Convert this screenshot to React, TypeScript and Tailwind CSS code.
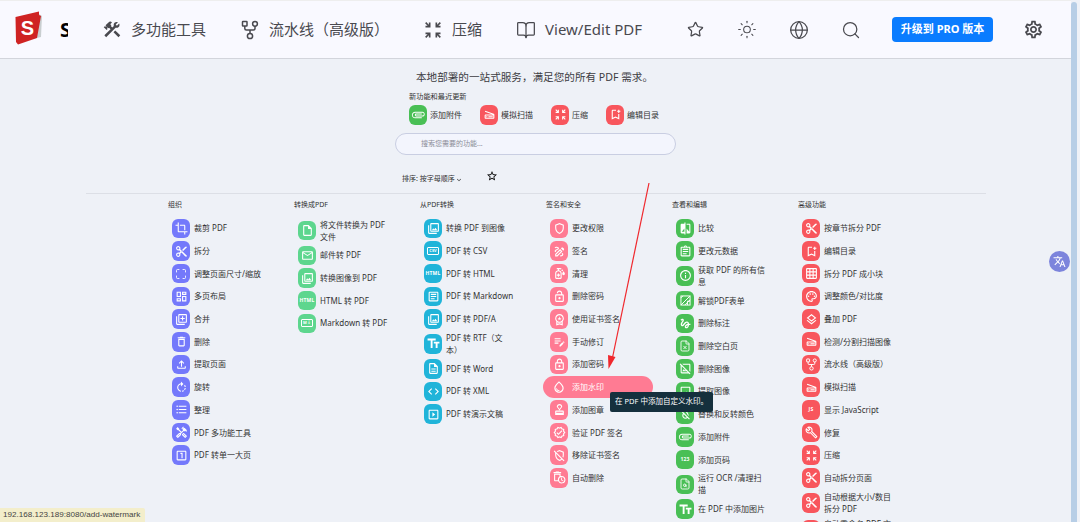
import React from 'react';
import { BookOpen, FileSearch, FileX, Globe, Maximize, Search, Star, Sun } from 'lucide-react';
import {
  MdContentCut, MdCrop, MdOutlineApproval, MdOutlineArticle, MdOutlineAssignment,
  MdOutlineAttachment, MdOutlineAutoDelete, MdOutlineBookmarkAdd, MdOutlineBuild, MdOutlineCode,
  MdOutlineCompare, MdOutlineConstruction, MdOutlineDashboard, MdOutlineDelete, MdOutlineDescription,
  MdOutlineDraw, MdOutlineEditNote, MdOutlineEmail, MdOutlineFileUpload,
  MdOutlineFormatColorReset, MdOutlineFormatListBulleted, MdOutlineGesture,
  MdOutlineGridOn, MdOutlineHandyman, MdOutlineHideImage, MdOutlineImage, MdOutlineInfo,
  MdOutlineInsertDriveFile, MdOutlineLayers, MdOutlineLibraryAdd,
  MdOutlineLock, MdOutlineLockOpen, MdOutlineLooksOne, MdOutlinePalette,
  MdOutlinePhotoLibrary, MdOutlineRemoveModerator, MdOutlineRotateRight, MdOutlineSanitizer,
  MdOutlineScanner, MdOutlineSettings, MdOutlineShield, MdOutlineSlideshow,
  MdOutlineStarBorder, MdOutlineTextFields, MdOutlineTranslate, MdOutlineVerified, MdOutlineWaterDrop,
  MdOutlineWorkspacePremium, MdOutlineZoomInMap, MdExpandMore,
} from 'react-icons/md';

type Tool = { label: string; icon: React.ReactNode; active?: boolean };
type Group = { title: string; color: string; tools: Tool[] };

const ic = (I: React.ComponentType<{ size?: number }>, size = 13) => <I size={size} />;
const tag = (s: string) => <span className="text-[5px] font-bold leading-none tracking-[0.2px]">{s}</span>;
const framed = (s: string) => (
  <span className="rounded-[1px] border border-white px-[1px] text-[4px] font-bold leading-[6px]">{s}</span>
);

function PipelineIcon({ size = 13 }: { size?: number }) {
  return (
    <svg width={size} height={size} viewBox="0 0 20 20" fill="none" stroke="currentColor" strokeWidth="1.5">
      <rect x="2.5" y="1.5" width="4.5" height="4.5" rx="0.5" />
      <circle cx="15" cy="3.8" r="2.4" />
      <circle cx="10" cy="16" r="2.6" />
      <path d="M4.8 6 V8.5 Q4.8 10 6.3 10 H13.5 Q15 10 15 8.5 V6.2 M10 10 V13.4" />
    </svg>
  );
}

function UnlockFormIcon() {
  return (
    <svg width="13" height="13" viewBox="0 0 20 20" fill="none" stroke="currentColor" strokeWidth="1.5">
      <rect x="3" y="3" width="14" height="14" />
      <path d="M3 17 L17 3 M9 17 L17 9 M6 3 L3 6 M13 17 V11 H17" />
    </svg>
  );
}

const groups: Group[] = [
  {
    title: '组织',
    color: 'bg-[#7479fb]',
    tools: [
      { label: '裁剪 PDF', icon: ic(MdCrop) },
      { label: '拆分', icon: ic(MdContentCut) },
      { label: '调整页面尺寸/缩放', icon: <Maximize size={12} strokeWidth={1.75} /> },
      { label: '多页布局', icon: ic(MdOutlineDashboard) },
      { label: '合并', icon: ic(MdOutlineLibraryAdd) },
      { label: '删除', icon: ic(MdOutlineDelete) },
      { label: '提取页面', icon: ic(MdOutlineFileUpload) },
      { label: '旋转', icon: ic(MdOutlineRotateRight) },
      { label: '整理', icon: ic(MdOutlineFormatListBulleted) },
      { label: 'PDF 多功能工具', icon: ic(MdOutlineHandyman) },
      { label: 'PDF 转单一大页', icon: ic(MdOutlineLooksOne) },
    ],
  },
  {
    title: '转换成PDF',
    color: 'bg-[#5dd68e]',
    tools: [
      { label: '将文件转换为 PDF 文件', icon: ic(MdOutlineInsertDriveFile) },
      { label: '邮件转 PDF', icon: ic(MdOutlineEmail) },
      { label: '转换图像到 PDF', icon: ic(MdOutlinePhotoLibrary) },
      { label: 'HTML 转 PDF', icon: tag('HTML') },
      { label: 'Markdown 转 PDF', icon: framed('M↓') },
    ],
  },
  {
    title: '从PDF转换',
    color: 'bg-[#20b4d9]',
    tools: [
      { label: '转换 PDF 到图像', icon: ic(MdOutlinePhotoLibrary) },
      { label: 'PDF 转 CSV', icon: framed('CSV') },
      { label: 'PDF 转 HTML', icon: tag('HTML') },
      { label: 'PDF 转 Markdown', icon: ic(MdOutlineArticle) },
      { label: 'PDF 转 PDF/A', icon: ic(MdOutlinePhotoLibrary) },
      { label: 'PDF 转 RTF（文\n本）', icon: ic(MdOutlineTextFields, 15) },
      { label: 'PDF 转 Word', icon: ic(MdOutlineDescription) },
      { label: 'PDF 转 XML', icon: ic(MdOutlineCode) },
      { label: 'PDF 转演示文稿', icon: ic(MdOutlineSlideshow) },
    ],
  },
  {
    title: '签名和安全',
    color: 'bg-[#ff7b93]',
    tools: [
      { label: '更改权限', icon: ic(MdOutlineShield) },
      { label: '签名', icon: ic(MdOutlineDraw) },
      { label: '清理', icon: ic(MdOutlineSanitizer) },
      { label: '删除密码', icon: ic(MdOutlineLockOpen) },
      { label: '使用证书签名', icon: ic(MdOutlineWorkspacePremium) },
      { label: '手动修订', icon: ic(MdOutlineEditNote) },
      { label: '添加密码', icon: ic(MdOutlineLock) },
      { label: '添加水印', icon: ic(MdOutlineWaterDrop, 14), active: true },
      { label: '添加图章', icon: ic(MdOutlineApproval) },
      { label: '验证 PDF 签名', icon: ic(MdOutlineVerified) },
      { label: '移除证书签名', icon: ic(MdOutlineRemoveModerator) },
      { label: '自动删除', icon: ic(MdOutlineAutoDelete) },
    ],
  },
  {
    title: '查看和编辑',
    color: 'bg-[#49bf55]',
    tools: [
      { label: '比较', icon: ic(MdOutlineCompare) },
      { label: '更改元数据', icon: ic(MdOutlineAssignment) },
      { label: '获取 PDF 的所有信息', icon: ic(MdOutlineInfo) },
      { label: '解锁PDF表单', icon: <UnlockFormIcon /> },
      { label: '删除标注', icon: ic(MdOutlineGesture) },
      { label: '删除空白页', icon: <FileX size={12} strokeWidth={1.75} /> },
      { label: '删除图像', icon: ic(MdOutlineHideImage) },
      { label: '提取图像', icon: ic(MdOutlineImage) },
      { label: '替换和反转颜色', icon: ic(MdOutlineFormatColorReset) },
      { label: '添加附件', icon: ic(MdOutlineAttachment, 14) },
      { label: '添加页码', icon: tag('123') },
      { label: '运行 OCR /清理扫描', icon: <FileSearch size={12} strokeWidth={1.75} /> },
      { label: '在 PDF 中添加图片', icon: ic(MdOutlineTextFields, 15) },
    ],
  },
  {
    title: '高级功能',
    color: 'bg-[#f8565d]',
    tools: [
      { label: '按章节拆分 PDF', icon: ic(MdContentCut) },
      { label: '编辑目录', icon: ic(MdOutlineBookmarkAdd) },
      { label: '拆分 PDF 成小块', icon: ic(MdOutlineGridOn) },
      { label: '调整颜色/对比度', icon: ic(MdOutlinePalette) },
      { label: '叠加 PDF', icon: ic(MdOutlineLayers) },
      { label: '检测/分割扫描图像', icon: ic(MdOutlineScanner) },
      { label: '流水线（高级版）', icon: <PipelineIcon /> },
      { label: '模拟扫描', icon: ic(MdOutlineScanner) },
      { label: '显示 JavaScript', icon: tag('JS') },
      { label: '修复', icon: ic(MdOutlineBuild) },
      { label: '压缩', icon: ic(MdOutlineZoomInMap) },
      { label: '自动拆分页面', icon: ic(MdContentCut) },
      { label: '自动根据大小/数目拆分 PDF', icon: ic(MdContentCut) },
      { label: '自动重命名 PDF 文件', icon: ic(MdOutlineInsertDriveFile) },
    ],
  },
];

const fresh = [
  { label: '添加附件', color: 'bg-[#49bf55]', icon: ic(MdOutlineAttachment, 14) },
  { label: '模拟扫描', color: 'bg-[#f8565d]', icon: ic(MdOutlineScanner) },
  { label: '压缩', color: 'bg-[#f8565d]', icon: ic(MdOutlineZoomInMap) },
  { label: '编辑目录', color: 'bg-[#f8565d]', icon: ic(MdOutlineBookmarkAdd) },
];

function IconBox({ color, children }: { color: string; children: React.ReactNode }) {
  return (
    <span className={`flex h-[19.5px] w-[18px] shrink-0 items-center justify-center rounded-[6px] text-white ${color}`}>
      {children}
    </span>
  );
}

function NavItem({ icon, label }: { icon: React.ReactNode; label: string }) {
  return (
    <div className="flex items-center gap-[9px] text-[15px] text-[#49494f]">
      <span className="flex w-[20px] justify-center">{icon}</span>
      <span className="whitespace-nowrap">{label}</span>
    </div>
  );
}

function Logo() {
  return (
    <svg width="28" height="34" viewBox="0 0 28 34" className="-mt-[4px] shrink-0">
      <path d="M8 30 L26 26 L27 5 L24 3 L22 24 Z" fill="#c9ced0" />
      <path d="M0.5 6 L24 0.5 L24 4 L26 5 L22 27 L3 33.5 L1 31 Z" fill="#cf2323" />
      <text x="12.5" y="24" textAnchor="middle" fontSize="20" fontWeight="700" fill="#fff" fontFamily="Liberation Sans">S</text>
    </svg>
  );
}

function Navbar() {
  return (
    <nav className="flex h-[59px] shrink-0 items-center border-t border-b border-t-[#eeeeee] border-b-[#d3d5dc] bg-[#f9f9ff] pl-[15px]">
      <Logo />
      <div className="ml-[17px] mr-[34px] h-[20px] w-[8px] overflow-hidden text-[20px] font-bold leading-[20px] text-black">S</div>
      <div className="flex items-center gap-[34px]">
        <NavItem icon={<MdOutlineConstruction size={21} />} label="多功能工具" />
        <NavItem icon={<PipelineIcon size={20} />} label="流水线（高级版）" />
        <NavItem icon={<MdOutlineZoomInMap size={20} />} label="压缩" />
        <NavItem icon={<BookOpen size={20} strokeWidth={1.5} />} label="View/Edit PDF" />
      </div>
      <div className="ml-[43px] flex items-center gap-[32px] text-[#49494f]">
        <span className="flex w-[20px] justify-center">
          <Star size={17} strokeWidth={1.75} />
        </span>
        <span className="flex w-[20px] justify-center">
          <Sun size={23} strokeWidth={1.25} />
        </span>
        <Globe size={20} strokeWidth={1.5} />
        <Search size={20} strokeWidth={1.5} />
      </div>
      <button className="ml-[31px] h-[25px] w-[101px] whitespace-nowrap rounded-[4px] bg-[#0a7cff] text-[11px] font-bold text-white">
        升级到 PRO 版本
      </button>
      <span className="ml-[30px] text-[#49494f]">
        <MdOutlineSettings size={21} />
      </span>
    </nav>
  );
}

function ToolRow({ tool, color }: { tool: Tool; color: string }) {
  if (tool.active) {
    return (
      <div className="relative z-10 my-[0.35px] -ml-[3px] flex h-[22px] w-[110px] items-center gap-[4px] rounded-full bg-[#ff7b93] pl-[7px] text-white">
        <span className="flex h-[19.5px] w-[18px] shrink-0 items-center justify-center">{tool.icon}</span>
        <span className="text-[8px] leading-[12px]">{tool.label}</span>
      </div>
    );
  }
  return (
    <div className="flex min-h-[22.7px] w-[104px] items-center gap-[4px] py-[1.5px] pl-[4px]">
      <IconBox color={color}>{tool.icon}</IconBox>
      <span className="w-[69px] whitespace-pre-line text-[8px] leading-[12px] text-[#333]">{tool.label}</span>
    </div>
  );
}

function Hero() {
  return (
    <section className="flex flex-col">
      <p className="mt-[10px] pr-[2px] text-center text-[10.6px] leading-[16px] text-[#3c3c42]">
        本地部署的一站式服务，满足您的所有 PDF 需求。
      </p>
      <p className="mt-[5px] pl-[323.5px] text-[7.2px] leading-[12px] text-[#333]">新功能和最近更新</p>
      <div className="mt-[3px] flex gap-[18px] pl-[323.5px]">
        {fresh.map((f) => (
          <div key={f.label} className="flex items-center gap-[3px]">
            <IconBox color={f.color}>{f.icon}</IconBox>
            <span className="text-[8px] text-[#333]">{f.label}</span>
          </div>
        ))}
      </div>
      <div className="mx-auto mt-[8px] flex h-[22px] w-[281px] items-center rounded-full border border-[#c9cee2] bg-[#f3f5fd] pl-[25px] pt-[1px] text-[7px] text-[#8b8d98]">
        搜索您需要的功能...
      </div>
      <div className="mt-[18px] flex h-[14px] items-center pl-[316.5px] text-[7px] text-[#333]">
        <span>排序: 按字母顺序</span>
        <MdExpandMore size={8} />
        <span className="ml-[23px] -mt-[7px] text-black">
          <MdOutlineStarBorder size={12} />
        </span>
      </div>
      <div className="mt-[6px] h-px bg-[#dcdfe6]" />
    </section>
  );
}

export default function App() {
  return (
    <div className="relative flex h-[522px] overflow-hidden bg-[#eef1f7] font-['Noto_Sans','Noto_Sans_CJK_SC',sans-serif]">
      <div className="flex min-w-0 flex-1 flex-col">
        <Navbar />
        <main className="mx-auto w-[900px]">
          <Hero />
          <div className="flex pl-[82.5px] pt-[5px]">
            {groups.map((g) => (
              <div key={g.title} className="w-[126px]">
                <h3 className="mb-[6.5px] text-[7px] font-normal leading-[12px] text-[#333]">{g.title}</h3>
                {g.tools.map((t) => (
                  <ToolRow key={t.label} tool={t} color={g.color} />
                ))}
              </div>
            ))}
          </div>
        </main>
      </div>
      <div className="w-[9px] shrink-0 bg-[#eef1f7] pt-[2px]">
        <div className="h-full w-[6px] rounded-t-[3px] bg-[#b7cee6]" />
      </div>

      {/* red annotation arrow drawn over the page */}
      <svg className="pointer-events-none absolute left-[600px] top-[180px] z-30" width="56" height="195" viewBox="0 0 56 195">
        <path d="M49 3 L12 180" stroke="#f0282d" strokeWidth="1.2" fill="none" />
        <path d="M8.5 189 L8 175 L15.5 177 Z" fill="#f0282d" />
      </svg>

      <div className="absolute left-[610px] top-[392px] z-20 flex h-[20px] w-[103px] items-center justify-center rounded-[2px] bg-[#15303d] text-[7.5px] text-white">
        在 PDF 中添加自定义水印。
      </div>

      <div className="absolute left-[1049px] top-[251px] z-20 flex h-[21px] w-[21px] items-center justify-center rounded-full bg-[#7c84dc] text-white">
        <MdOutlineTranslate size={13} />
      </div>

      <div className="absolute bottom-0 left-0 z-20 flex h-[14px] w-[145px] items-center whitespace-nowrap rounded-tr-[2px] bg-[#f3eecb] pl-[3px] font-['Liberation_Sans',sans-serif] text-[8.1px] text-[#444]">
        192.168.123.189:8080/add-watermark
      </div>
    </div>
  );
}
